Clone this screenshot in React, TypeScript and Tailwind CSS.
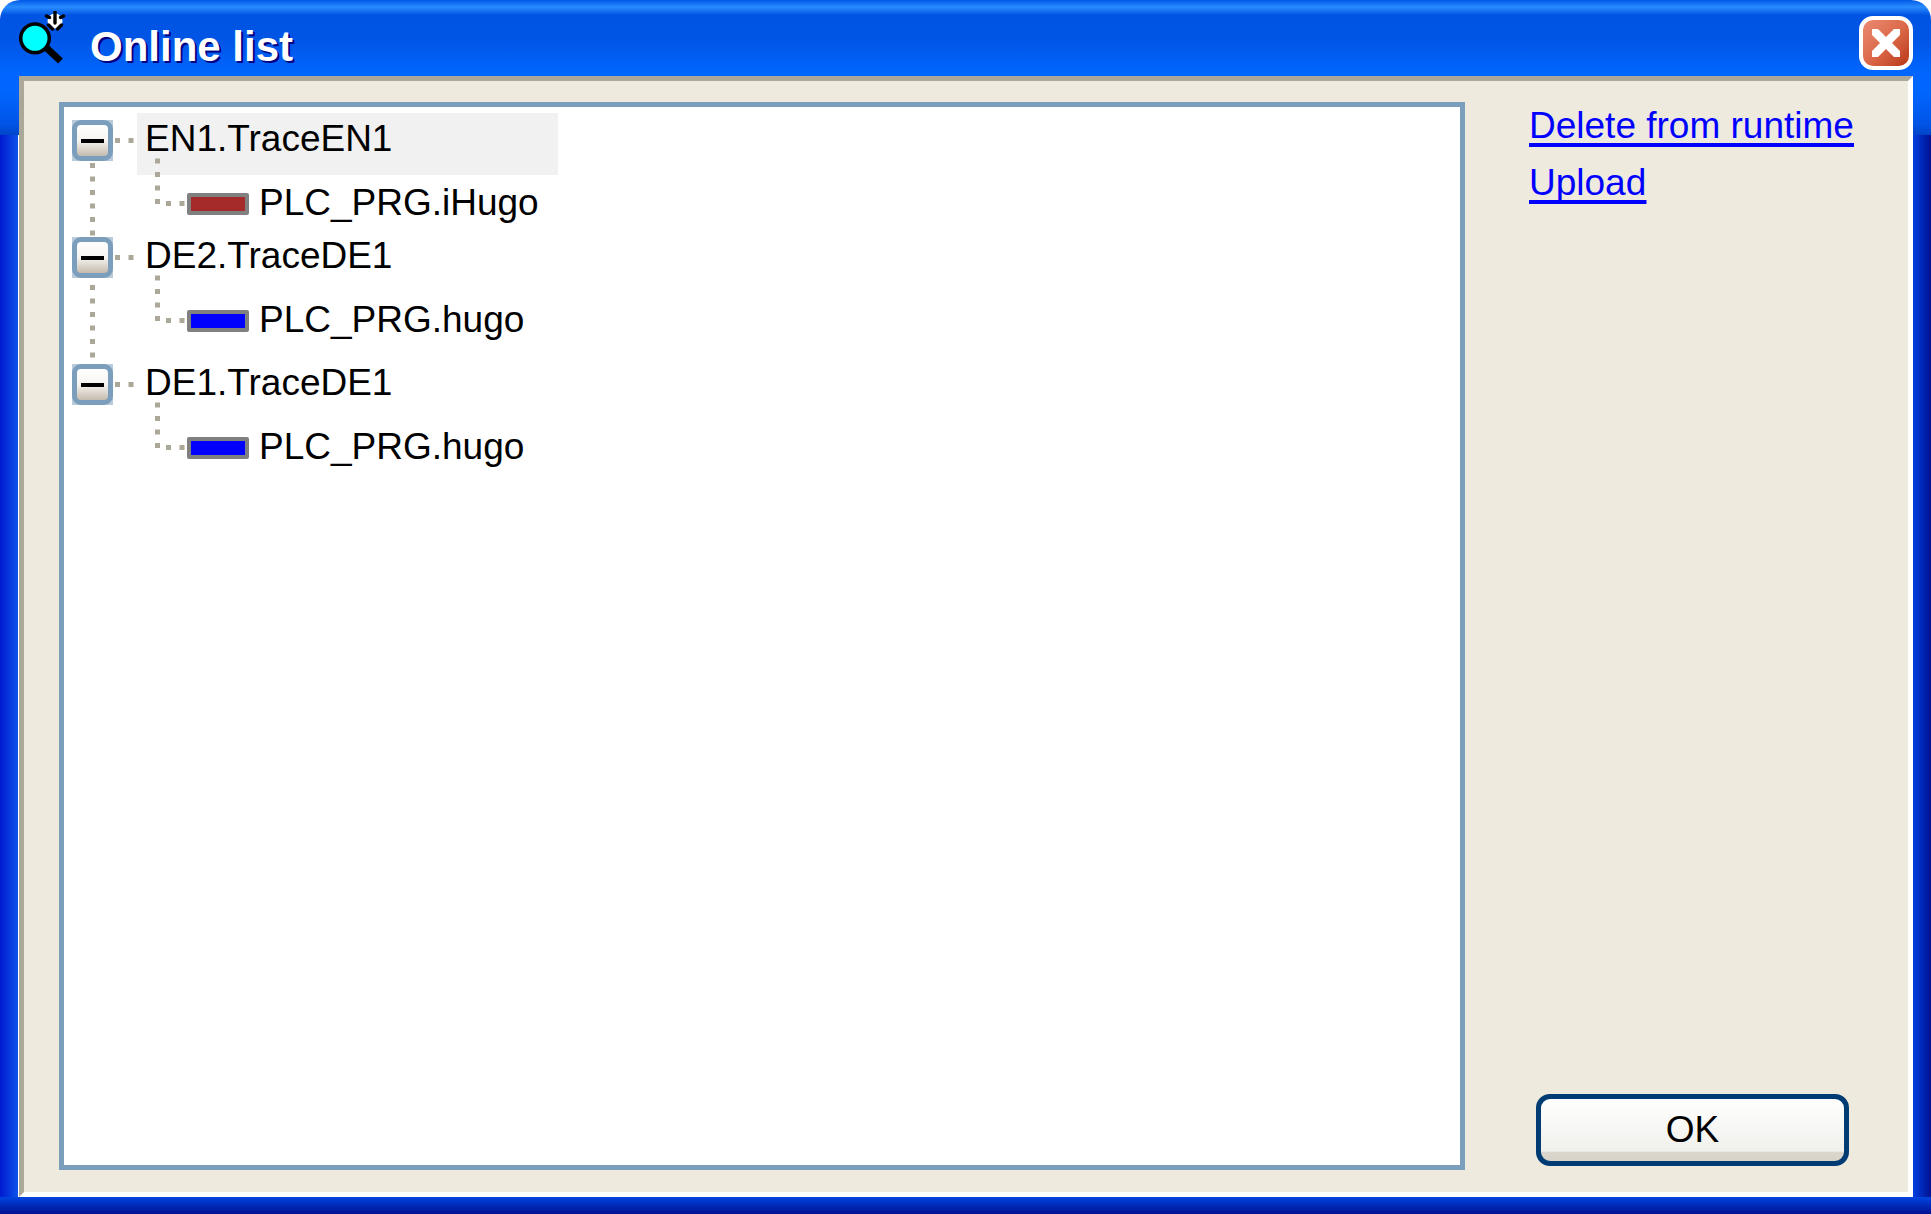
import { useState } from 'react'

type Trace = {
  id: string
  name: string
  variable: string
  swatch: string
  height: string
}

const traces: Trace[] = [
  { id: 'en1', name: 'EN1.TraceEN1', variable: 'PLC_PRG.iHugo', swatch: 'bg-[#a52a2a]', height: 'h-[117px]' },
  { id: 'de2', name: 'DE2.TraceDE1', variable: 'PLC_PRG.hugo', swatch: 'bg-[#0000ff]', height: 'h-[127px]' },
  { id: 'de1', name: 'DE1.TraceDE1', variable: 'PLC_PRG.hugo', swatch: 'bg-[#0000ff]', height: 'h-[127px]' },
]

function TraceIcon() {
  return (
    <svg width="50" height="54" viewBox="0 0 50 54" aria-hidden>
      <path d="M27 35.5 L42.5 50" stroke="#000" strokeWidth="7" />
      <circle cx="17" cy="27.3" r="14.3" fill="#00ffff" stroke="#000" strokeWidth="3.6" />
      <circle cx="37" cy="10" r="7.5" fill="#fff" />
      <path d="M37 1v11M28.5 5l3 1.500M45.500 5l-3 1.500M30.500 14l4 4M43.500 14l-4 4" stroke="#000" strokeWidth="3.4" strokeLinecap="round" />
    </svg>
  )
}

function CloseIcon() {
  return (
    <svg width="30" height="30" viewBox="0 0 30 30" aria-hidden>
      <path d="M1 1h6l8 8 8-8h6v6l-8 8 8 8v6h-6l-8-8-8 8H1v-6l8-8-8-8z" fill="#fff" />
    </svg>
  )
}

function TraceNode({ trace, last, selected, onSelect }: { trace: Trace; last: boolean; selected: boolean; onSelect: () => void }) {
  const [open, setOpen] = useState(true)

  return (
    <li className={`flex ${open ? trace.height : 'h-[62px]'}`}>
      <div className="flex w-[41px] flex-col items-center pt-[7px]">
        <button
          onClick={() => setOpen(o => !o)}
          aria-label={open ? `Collapse ${trace.name}` : `Expand ${trace.name}`}
          aria-expanded={open}
          className="h-[41px] w-[41px] shrink-0 bg-[#b9cbdb]"
        >
          <span className="flex h-full w-full items-center justify-center rounded-[9px] border-5 border-[#7b9ebd] bg-linear-to-b from-white via-[#f6f4f0] to-[#c5bbae]">
            <span className="h-1 w-[23px] bg-black" />
          </span>
        </button>
        {!last && open && (
          <div className="-mb-[7px] flex flex-1 items-center">
            <svg width="5" height="73" viewBox="0 0 5 73" aria-hidden>
              <path d="M2.5 0V73" stroke="#aca899" strokeWidth="5" strokeDasharray="5 8.5" />
            </svg>
          </div>
        )}
      </div>
      <svg width="24" height="62" viewBox="0 0 24 62" aria-hidden>
        <path d="M2 27.5H21" stroke="#aca899" strokeWidth="5" strokeDasharray="5 8.5" />
      </svg>
      <div>
        <button
          onClick={onSelect}
          className={`flex h-[62px] w-[421px] items-start pl-2 text-left ${selected ? 'bg-[#f1f1f1]' : ''}`}
        >
          {trace.name}
        </button>
        {open && (
          <div className="flex pl-[18px]">
            <svg width="32" height="48" viewBox="0 0 32 48" className="-mt-[17px]" aria-hidden>
              <path d="M2.5 0.5V46" stroke="#aca899" strokeWidth="5" strokeDasharray="5 8.5" />
              <path d="M11 45.5H30" stroke="#aca899" strokeWidth="5" strokeDasharray="5 8.5" />
            </svg>
            <span className={`mt-[18px] h-[22px] w-[62px] rounded-[2px] border-4 border-[#808080] ${trace.swatch}`} />
            <span className="pt-[2px] pl-[10px]">{trace.variable}</span>
          </div>
        )}
      </div>
    </li>
  )
}

export default function App() {
  const [selected, setSelected] = useState('en1')

  return (
    <div className="bg-white">
      <main className="flex min-h-screen flex-col rounded-t-[20px] bg-[linear-gradient(to_bottom,#0058e6_0,#2a8cff_7px,#0054e3_15px,#0055e5_40px,#0066ff_72px,#0066ff_92px,#0054e6_124px,#0044c8_135px),linear-gradient(to_bottom,#0045e0,#001090),linear-gradient(to_right,#0019cf,#0d54ea),linear-gradient(to_right,#0040e0,#001090)] bg-[size:100%_135px,100%_17px,18px_100%,18px_100%] bg-[position:top,bottom,left,right] bg-no-repeat pb-[17px] font-['Liberation_Sans',Arial,sans-serif] text-[37px] leading-[52px] text-black">
        <header className="flex h-[76px] shrink-0 items-start justify-between px-[18px]">
          <div className="flex pt-[11px]">
            <TraceIcon />
            <h1 className="pl-[22px] text-[42px] leading-[72px] font-bold text-white [text-shadow:2px_2px_0_#000080]">Online list</h1>
          </div>
          <button
            aria-label="Close"
            className="mt-4 flex h-[54px] w-[54px] items-center justify-center rounded-[14px] border-4 border-white bg-linear-to-br from-[#ea8a72] via-[#dc6a4a] to-[#b83614]"
          >
            <CloseIcon />
          </button>
        </header>

        <div className="mr-[18px] ml-[19px] flex flex-1 border-5 border-t-[#aca899] border-r-white border-b-white border-l-[#aca899] bg-[#eeeade] pt-[21px] pr-[59px] pb-[22px] pl-[35px]">
          <ul className="flex-1 border-5 border-[#7b9ebd] bg-white pt-[6px] pl-2">
            {traces.map((trace, i) => (
              <TraceNode
                key={trace.id}
                trace={trace}
                last={i === traces.length - 1}
                selected={selected === trace.id}
                onSelect={() => setSelected(trace.id)}
              />
            ))}
          </ul>

          <aside className="flex w-[384px] shrink-0 flex-col justify-between pb-1 pl-[64px]">
            <nav className="flex flex-col items-start gap-[9px] leading-[48px] whitespace-nowrap text-[#0000ff] underline decoration-4 underline-offset-[5px] [text-decoration-skip-ink:none]">
              <a href="#delete">Delete from runtime</a>
              <a href="#upload">Upload</a>
            </nav>
            <button className="ml-[7px] h-[72px] rounded-[14px] border-5 border-[#003c74] bg-[linear-gradient(to_bottom,#ffffff,#f8f8f6_40%,#f0f1ec_84%,#dcd7cd_86%,#d8d2c8)]">
              OK
            </button>
          </aside>
        </div>
      </main>
    </div>
  )
}
